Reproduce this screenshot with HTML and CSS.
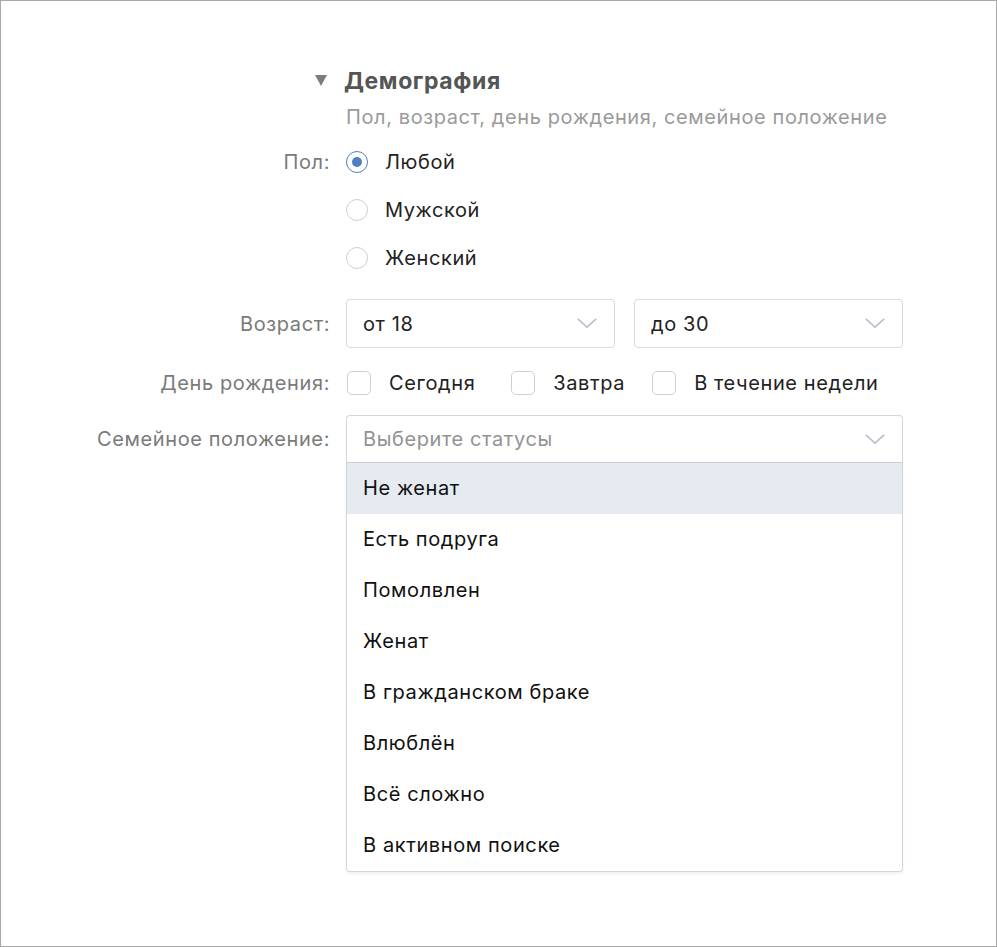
FILE: index.html
```html
<!DOCTYPE html>
<html lang="ru">
<head>
<meta charset="utf-8">
<title>Демография</title>
<link rel="stylesheet" href="styles.css">
</head>
<body>
<div class="frame">
  <div class="form">
    <div class="label label-title"><span class="tri"></span></div>
    <div class="title">Демография</div>

    <div class="label"></div>
    <div class="subtitle">Пол, возраст, день рождения, семейное положение</div>

    <div class="label label-top">Пол:</div>
    <div class="radios">
      <div class="radio-item"><span class="radio checked"></span><span class="opt">Любой</span></div>
      <div class="radio-item"><span class="radio"></span><span class="opt">Мужской</span></div>
      <div class="radio-item"><span class="radio"></span><span class="opt">Женский</span></div>
    </div>

    <div class="label row-age">Возраст:</div>
    <div class="selects row-age">
      <div class="select"><span class="val">от 18</span><svg class="chev" viewBox="0 0 24 14"><path d="M2 2 L12 11 L22 2"/></svg></div>
      <div class="select"><span class="val">до 30</span><svg class="chev" viewBox="0 0 24 14"><path d="M2 2 L12 11 L22 2"/></svg></div>
    </div>

    <div class="label row-bday">День рождения:</div>
    <div class="checks row-bday">
      <div class="check-item c1"><span class="check"></span><span class="opt">Сегодня</span></div>
      <div class="check-item c2"><span class="check"></span><span class="opt">Завтра</span></div>
      <div class="check-item"><span class="check"></span><span class="opt">В течение недели</span></div>
    </div>

    <div class="label label-status row-status">Семейное положение:</div>
    <div class="status row-status">
      <div class="select open"><span class="placeholder">Выберите статусы</span><svg class="chev" viewBox="0 0 24 14"><path d="M2 2 L12 11 L22 2"/></svg></div>
      <ul class="list">
        <li class="active">Не женат</li>
        <li>Есть подруга</li>
        <li>Помолвлен</li>
        <li>Женат</li>
        <li>В гражданском браке</li>
        <li>Влюблён</li>
        <li>Всё сложно</li>
        <li>В активном поиске</li>
      </ul>
    </div>
  </div>
</div>
</body>
</html>
```

FILE: styles.css
```css
* { box-sizing: border-box; }
html, body { margin: 0; padding: 0; background: #fff; }
body {
  font-family: Inter, "Noto Sans", "Liberation Sans", sans-serif;
  font-size: 20px;
  letter-spacing: 0.6px;
  color: #222;
}
.frame {
  width: 997px;
  height: 947px;
  border: 1px solid #a8a8a8;
}
.form {
  display: grid;
  grid-template-columns: 329px 557px;
  column-gap: 16px;
  padding-top: 65px;
}
.label {
  text-align: right;
  color: #7a7a7a;
  display: flex;
  align-items: center;
  justify-content: flex-end;
}
.label-top { align-items: flex-start; height: 48px; line-height: 48px; }
.label-title { height: 30px; padding-right: 3px; }
.tri {
  width: 0; height: 0;
  border-left: 6px solid transparent;
  border-right: 6px solid transparent;
  border-top: 11px solid #7d7d7d;
  margin-top: -2px;
}
.title {
  height: 30px;
  line-height: 30px;
  font-weight: 700;
  font-size: 23px;
  color: #555;
  margin-left: -2px;
}
.subtitle {
  height: 42px;
  line-height: 42px;
  color: #9a9a9a;
}
.radios { display: flex; flex-direction: column; }
.radio-item { height: 48px; display: flex; align-items: center; }
.radio {
  width: 22px; height: 22px;
  border-radius: 50%;
  border: 1.5px solid #c8d1db;
  margin-right: 17px;
  display: flex; align-items: center; justify-content: center;
}
.radio.checked { border-color: #4f7fbe; }
.radio.checked::after {
  content: "";
  width: 10px; height: 10px;
  border-radius: 50%;
  background: #4f7fbe;
}
.opt { color: #222; }
.row-age { margin-top: 17px; height: 49px; }
.selects { display: grid; grid-template-columns: 1fr 1fr; column-gap: 19px; }
.select {
  height: 49px;
  border: 1px solid #d5dbe1;
  border-radius: 4px;
  display: flex;
  align-items: center;
  justify-content: space-between;
  padding: 0 16px 0 16px;
  background: #fff;
}
.chev { width: 22px; height: 13px; fill: none; stroke: #b9c0c9; stroke-width: 1.8; }
.row-bday { margin-top: 18px; height: 34px; }
.checks { display: flex; align-items: center; }
.check-item { display: flex; align-items: center; }
.check {
  width: 24px; height: 24px;
  border: 1.5px solid #c8d1db;
  border-radius: 5px;
  margin: 0 18px 0 1px;
}
.c1 { margin-right: 35px; }
.c2 { margin-right: 26px; }
.row-status { margin-top: 15px; }
.label-status { align-items: flex-start; height: 48px; line-height: 48px; }
.status { display: flex; flex-direction: column; }
.select.open {
  height: 48px;
  border-radius: 4px 4px 0 0;
  border-color: #d0d6dc;
  border-bottom-color: #c9ced4;
}
.placeholder { color: #939393; }
.list {
  list-style: none;
  margin: 0;
  padding: 0;
  border: 1px solid #d0d6dc;
  border-top: none;
  border-radius: 0 0 4px 4px;
  box-shadow: 0 2px 3px rgba(0, 0, 0, 0.06);
}
.list li {
  height: 51px;
  line-height: 51px;
  padding-left: 16px;
  color: #111;
}
.list li.active { background: #e5ebf1; }
```
